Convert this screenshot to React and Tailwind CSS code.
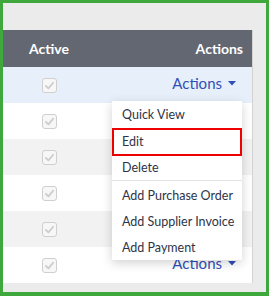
import React from 'react';

const rows = ['bg-[#e7f0fa]', 'bg-white', 'bg-[#f2f2f2]', 'bg-white', 'bg-[#f2f2f2]', 'bg-white'];

function Check() {
  return (
    <div className="w-[15px] h-[15px] rounded-[3px] border border-[#cfcfcf] bg-[#f7f7f7] flex items-center justify-center">
      <svg width="11" height="11" viewBox="0 0 12 12">
        <path d="M2 6.5 L4.8 9.2 L10 3" fill="none" stroke="#cdcdcd" strokeWidth="2" strokeLinecap="round" strokeLinejoin="round" />
      </svg>
    </div>
  );
}

function ActionsLink() {
  return (
    <span className="flex items-center gap-[6px] text-[15px] text-[#3050b8] pr-[16px] -mt-[3px]">
      Actions
      <svg width="8" height="5" viewBox="0 0 8 5"><path d="M0 0 H8 L4 4.5 Z" fill="#3050b8" /></svg>
    </span>
  );
}

export default function App() {
  const items = [
    { label: 'Quick View', cls: 'h-[26px] pl-[10px]' },
    { label: 'Edit', cls: 'h-[28px] pl-[8px] border-2 border-[#ee0000]' },
    { label: 'Delete', cls: 'h-[24px] pl-[10px]' },
  ];
  const items2 = [
    { label: 'Add Purchase Order', cls: 'h-[26px]' },
    { label: 'Add Supplier Invoice', cls: 'h-[26px]' },
    { label: 'Add Payment', cls: 'h-[25px] pt-[1px]' },
  ];

  return (
    <div className="w-[269px] h-[296px] border-[3px] border-b-4 border-[#3ea83c] bg-[#ebebeb] pt-[27px] relative overflow-hidden" style={{ fontFamily: 'Lato, "Open Sans", sans-serif' }}>
      <div className="w-[250px] border-r border-[#d2d2d2]">
        <div className="h-[37px] bg-[#636771] grid grid-cols-[92px_1fr] items-center text-white font-bold text-[14px]">
          <div className="text-center">Active</div>
          <div className="text-right pr-[9px]">Actions</div>
        </div>
        {rows.map((bg, i) => (
          <div key={i} className={`h-[36px] grid grid-cols-[92px_1fr] items-center ${bg}`}>
            <div className="flex justify-center"><Check /></div>
            <div className="flex justify-end">{(i === 0 || i === 5) && <ActionsLink />}</div>
          </div>
        ))}
      </div>

      <div className="absolute left-[109px] top-[98px] w-[130px] bg-white shadow-[0_3px_10px_rgba(0,0,0,0.18)] pt-px text-[12.5px] text-[#2e3447]">
        {items.map((it) => (
          <div key={it.label} className={`flex items-center ${it.cls}`}>{it.label}</div>
        ))}
        <div className="h-px bg-[#e3e3e3] mb-[2px]" />
        {items2.map((it) => (
          <div key={it.label} className={`flex items-center pl-[10px] ${it.cls}`}>{it.label}</div>
        ))}
      </div>
    </div>
  );
}
